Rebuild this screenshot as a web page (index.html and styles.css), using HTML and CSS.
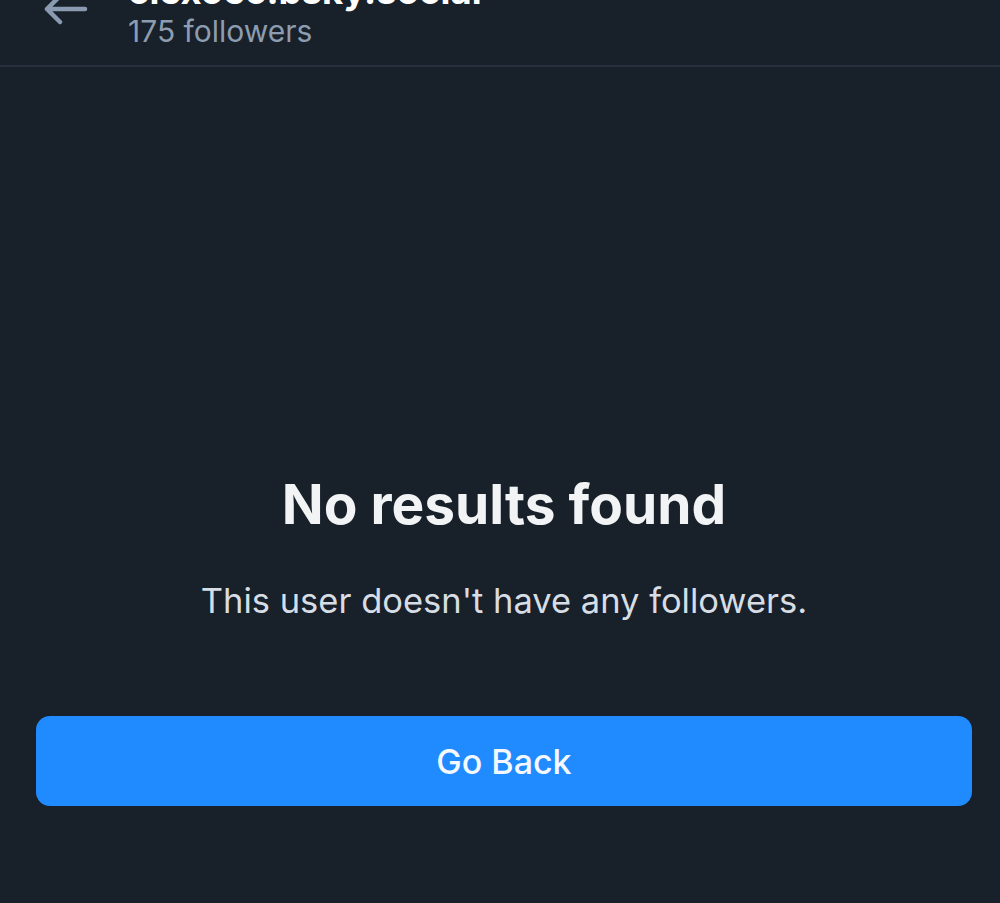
FILE: index.html
```html
<!DOCTYPE html>
<html lang="en">
<head>
<meta charset="utf-8">
<title>Followers</title>
<link rel="stylesheet" href="styles.css">
</head>
<body>
<div class="screen">
  <header class="header">
    <button class="back" aria-label="Back">
      <svg width="46" height="30" viewBox="0 0 46 30" fill="none" stroke="#8a9ab0" stroke-width="4.5" stroke-linecap="round" stroke-linejoin="round">
        <path d="M42 9H4M17 -4L4 9L17 22"/>
      </svg>
    </button>
    <div class="titles">
      <div class="title">clexoec.bsky.social</div>
      <div class="subtitle">175 followers</div>
    </div>
  </header>
  <main class="empty">
    <h1 class="empty-title">No results found</h1>
    <p class="empty-text">This user doesn't have any followers.</p>
    <button class="go-back">Go Back</button>
  </main>
</div>
</body>
</html>
```
FILE: styles.css
```css
* { box-sizing: border-box; }
html, body { margin: 0; padding: 0; }
body {
  background: #18202a;
  font-family: Inter, "Noto Sans", sans-serif;
  color: #f1f3f5;
}
.screen {
  width: 1000px;
  height: 903px;
  overflow: hidden;
  display: flex;
  flex-direction: column;
}
.header {
  height: 67px;
  flex: none;
  display: flex;
  align-items: flex-end;
  border-bottom: 2px solid #27313d;
  padding: 0 0 17px 0;
}
.back {
  background: none;
  border: 0;
  padding: 0;
  width: 128px;
  align-self: flex-start;
  display: flex;
  justify-content: flex-start;
  padding-left: 43px;
}
.titles {
  display: flex;
  flex-direction: column;
}
.title {
  font-size: 36.5px;
  font-weight: 700;
  line-height: 40px;
  margin-top: -43px;
  margin-bottom: 3px;
  color: #ffffff;
}
.subtitle {
  font-size: 30px;
  line-height: 34px;
  color: #8d9db1;
}
.empty {
  flex: 1;
  display: flex;
  flex-direction: column;
  align-items: center;
  padding: 0 28px 0 36px;
}
.empty-title {
  margin: 404px 0 0 0;
  font-size: 55px;
  line-height: 66px;
  font-weight: 700;
  color: #f1f3f5;
}
.empty-text {
  margin: 44px 0 0 0;
  font-size: 34.5px;
  line-height: 40px;
  color: #d7dde5;
}
.go-back {
  margin-top: 95px;
  width: 936px;
  height: 90px;
  border: 0;
  border-radius: 14px;
  background: #208bfe;
  color: #f5f9ff;
  font-family: Inter, "Noto Sans", sans-serif;
  font-size: 34px;
  font-weight: 500;
}
```
